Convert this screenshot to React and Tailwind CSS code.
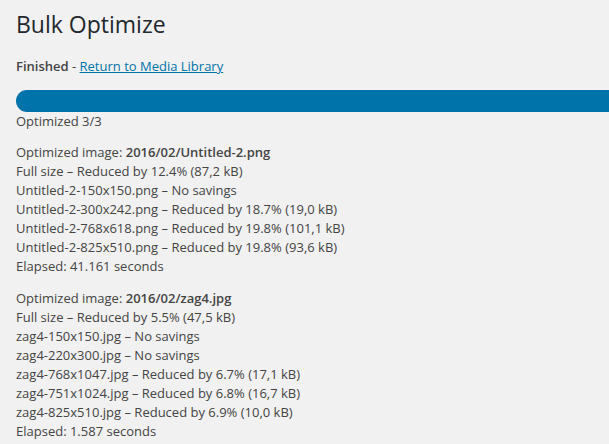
import React from 'react';

const batches = [
    {
        file: '2016/02/Untitled-2.png',
        lines: [
            'Full size – Reduced by 12.4% (87,2 kB)',
            'Untitled-2-150x150.png – No savings',
            'Untitled-2-300x242.png – Reduced by 18.7% (19,0 kB)',
            'Untitled-2-768x618.png – Reduced by 19.8% (101,1 kB)',
            'Untitled-2-825x510.png – Reduced by 19.8% (93,6 kB)',
        ],
        elapsed: '41.161',
    },
    {
        file: '2016/02/zag4.jpg',
        lines: [
            'Full size – Reduced by 5.5% (47,5 kB)',
            'zag4-150x150.jpg – No savings',
            'zag4-220x300.jpg – No savings',
            'zag4-768x1047.jpg – Reduced by 6.7% (17,1 kB)',
            'zag4-751x1024.jpg – Reduced by 6.8% (16,7 kB)',
            'zag4-825x510.jpg – Reduced by 6.9% (10,0 kB)',
        ],
        elapsed: '1.587',
    },
];

export default function App() {
    return (
        <div className="min-h-[444px] bg-[#f1f1f1] pl-4 font-['Open_Sans',sans-serif] text-[13px] leading-[19px] text-[#444]">
            <h1 className="pt-[10px] pb-[4px] text-[23px] leading-[29px] font-normal text-[#23282d]">Bulk Optimize</h1>
            <p className="mt-[14px]">
                <span className="font-semibold">Finished</span> - <a href="#" className="text-[#0073aa] underline">Return to Media Library</a>
            </p>
            <div className="mt-[14px] h-[22px] rounded-l-full bg-[#0073aa]"></div>
            <p>Optimized 3/3</p>
            {batches.map((b, i) => (
                <div key={b.file} className={i === 0 ? 'mt-[12px]' : 'mt-[13px]'}>
                    <p>Optimized image: <span className="font-semibold">{b.file}</span></p>
                    {b.lines.map(line => (
                        <p key={line}>{line}</p>
                    ))}
                    <p>Elapsed: {b.elapsed} seconds</p>
                </div>
            ))}
        </div>
    );
}
